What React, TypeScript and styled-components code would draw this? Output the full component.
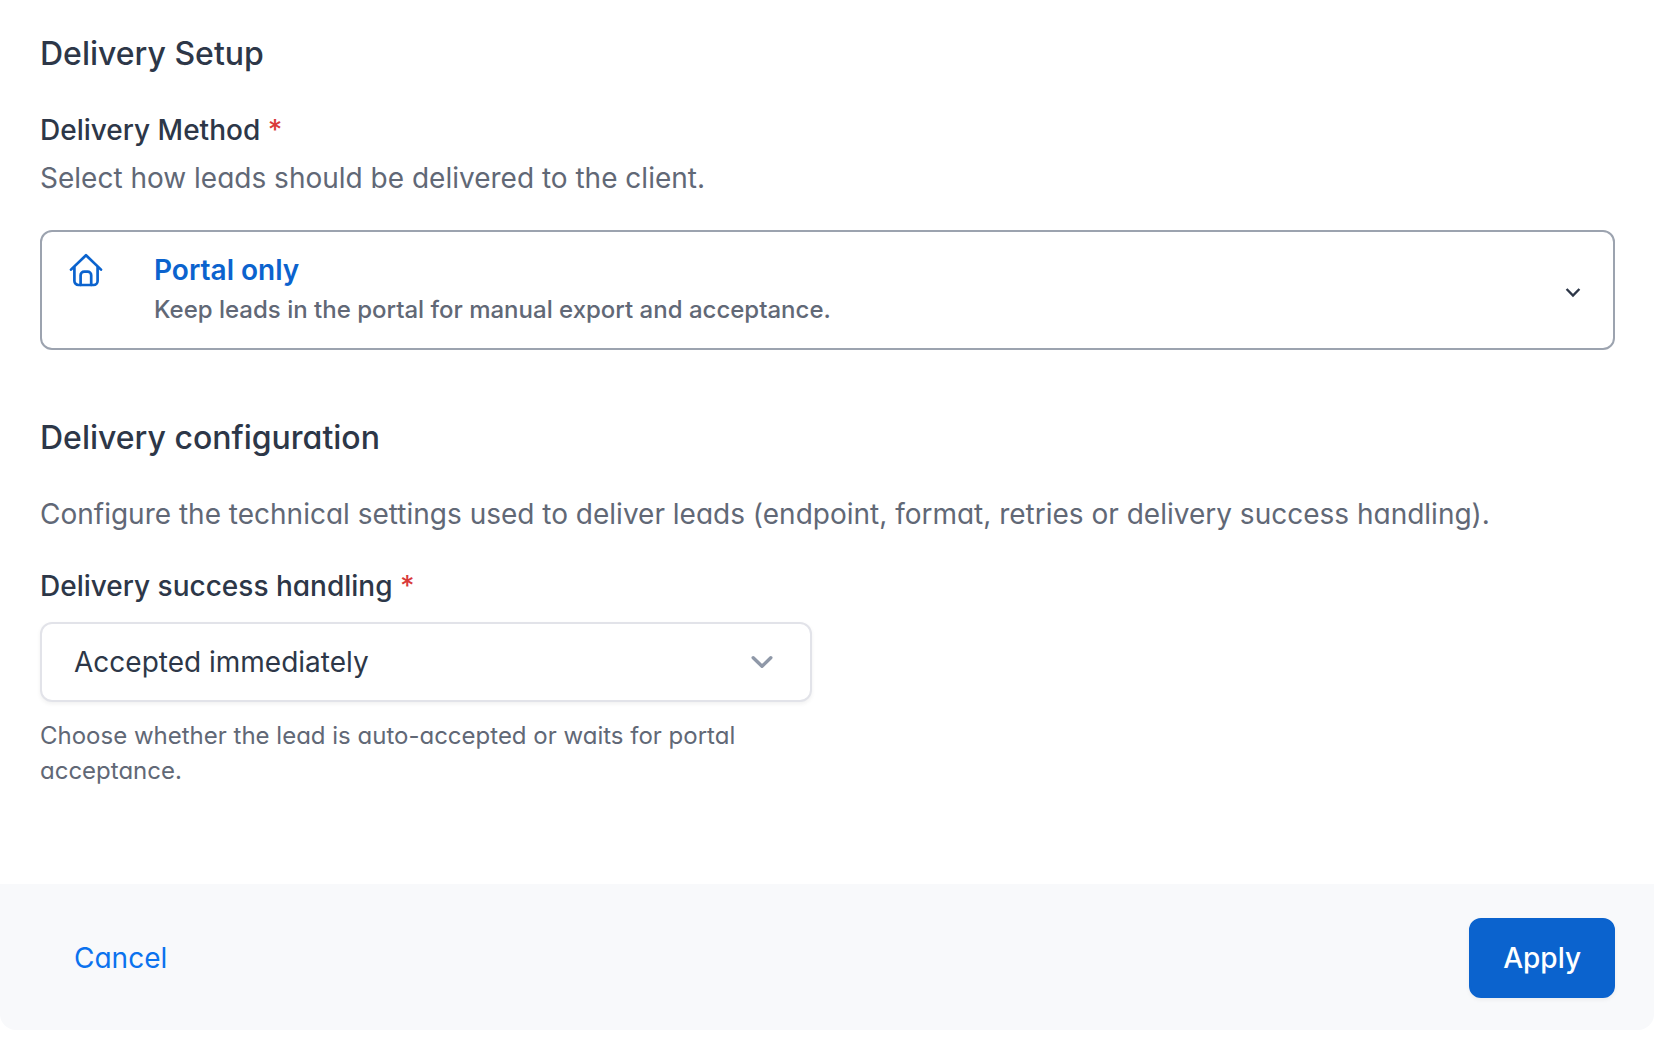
import React, { useState } from "react";
import styled, { createGlobalStyle } from "styled-components";

const GlobalStyle = createGlobalStyle`
  *, *::before, *::after {
    box-sizing: border-box;
  }
  body {
    margin: 0;
    background: #ffffff;
    color: #2d3748;
    font-family: Inter, "Liberation Sans", sans-serif;
    font-size: 28px;
    line-height: 40px;
    font-optical-sizing: none;
    font-feature-settings: "cv11" 1;
    -webkit-font-smoothing: antialiased;
  }
`;

const Panel = styled.form`
  overflow: hidden;
  border-radius: 0 0 16px 16px;
  background: #ffffff;
`;

const Body = styled.div`
  display: flex;
  flex-direction: column;
  gap: 64px;
  padding: 30px 39px 96px 40px;
`;

const Section = styled.section`
  display: flex;
  flex-direction: column;
  gap: 32px;
`;

const Heading = styled.h2`
  margin: 0;
  font-size: 32px;
  line-height: 48px;
  font-weight: 500;
`;

const Field = styled.div<{ $half?: boolean }>`
  display: flex;
  flex-direction: column;
  gap: 16px;
  width: ${(p) => (p.$half ? "49%" : "100%")};
`;

const LabelGroup = styled.div`
  display: flex;
  flex-direction: column;
  gap: 8px;
  margin-bottom: 16px;
`;

const Label = styled.label`
  font-weight: 500;
`;

const Required = styled.span`
  color: #d93a3a;
`;

const Description = styled.p`
  margin: 0;
  color: #616876;
`;

const Hint = styled(Description)`
  font-size: 24px;
  line-height: 35px;
`;

const MethodButton = styled.button`
  display: flex;
  align-items: center;
  width: 100%;
  padding: 18px 32px 18px 26px;
  border: 2px solid #9ca3af;
  border-radius: 12px;
  background: #ffffff;
  color: #2d3748;
  font-family: inherit;
  font-size: 24px;
  line-height: 40px;
  font-weight: 500;
  text-align: left;
  cursor: pointer;
`;

const MethodIcon = styled.svg`
  flex: none;
  align-self: flex-start;
  width: 36px;
  height: 40px;
  margin-right: 50px;
  color: #0b63ce;
`;

const MethodText = styled.span`
  display: flex;
  flex: 1;
  flex-direction: column;
`;

const MethodName = styled.span`
  color: #0b63ce;
  font-size: 28px;
  font-weight: 600;
`;

const MethodDetail = styled.span`
  color: #616876;
`;

const MethodChevron = styled.svg`
  flex: none;
  width: 16px;
  height: 16px;
`;

const SelectWrap = styled.div`
  position: relative;
`;

const Select = styled.select`
  display: block;
  width: 100%;
  height: 80px;
  padding: 0 80px 0 32px;
  border: 2px solid #e2e3e9;
  border-radius: 12px;
  background: #ffffff;
  box-shadow: 0 2px 4px rgba(0, 0, 0, 0.06);
  color: #2d3748;
  font-family: inherit;
  font-size: 28px;
  appearance: none;
`;

const SelectChevron = styled.svg`
  position: absolute;
  top: 28px;
  right: 38px;
  width: 24px;
  height: 24px;
  color: #8f98a8;
  pointer-events: none;
`;

const Footer = styled.footer`
  display: flex;
  align-items: center;
  justify-content: space-between;
  padding: 34px 39px 32px 40px;
  background: #f8f9fb;
`;

const Button = styled.button<{ $primary?: boolean }>`
  height: 80px;
  padding: 0 32px;
  border: 2px solid ${(p) => (p.$primary ? "#0b63ce" : "transparent")};
  border-radius: 12px;
  background: ${(p) => (p.$primary ? "#0b63ce" : "transparent")};
  box-shadow: ${(p) => (p.$primary ? "0 2px 4px rgba(0, 0, 0, 0.05)" : "none")};
  color: ${(p) => (p.$primary ? "#ffffff" : "#0b72ee")};
  font: inherit;
  font-weight: ${(p) => (p.$primary ? 500 : 400)};
  font-feature-settings: inherit;
  cursor: pointer;
`;

export default function App() {
  const [handling, setHandling] = useState("immediate");

  return (
    <>
      <GlobalStyle />
      <Panel onSubmit={(event) => event.preventDefault()}>
        <Body>
          <Section>
            <Heading>Delivery Setup</Heading>
            <Field>
              <LabelGroup>
                <Label htmlFor="delivery-method">
                  Delivery Method <Required>*</Required>
                </Label>
                <Description id="delivery-method-help">
                  Select how leads should be delivered to the client.
                </Description>
              </LabelGroup>
              <MethodButton
                id="delivery-method"
                type="button"
                aria-haspopup="listbox"
                aria-expanded={false}
                aria-describedby="delivery-method-help"
              >
                <MethodIcon viewBox="0 0 36 40" fill="none" stroke="currentColor" strokeWidth="2.7" strokeLinecap="round" strokeLinejoin="round" aria-hidden="true">
                  <path d="M3 19.6 18 5.2 33 19.6" />
                  <path d="M6.4 17.5V31a4 4 0 0 0 4 4H25.6a4 4 0 0 0 4-4V17.5" />
                  <path d="M12.6 35V25.3a3.6 3.6 0 0 1 3.6-3.6h3.4a3.6 3.6 0 0 1 3.6 3.6V35" />
                </MethodIcon>
                <MethodText>
                  <MethodName>Portal only</MethodName>
                  <MethodDetail>Keep leads in the portal for manual export and acceptance.</MethodDetail>
                </MethodText>
                <MethodChevron viewBox="0 0 16 16" fill="none" stroke="currentColor" strokeWidth="2.4" aria-hidden="true">
                  <path d="m1.6 7 6.4 6.6L14.4 7" />
                </MethodChevron>
              </MethodButton>
            </Field>
          </Section>
          <Section>
            <Heading>Delivery configuration</Heading>
            <Description>
              Configure the technical settings used to deliver leads (endpoint, format, retries or delivery success
              handling).
            </Description>
            <Field $half>
              <Label htmlFor="success-handling">
                Delivery success handling <Required>*</Required>
              </Label>
              <SelectWrap>
                <Select
                  id="success-handling"
                  value={handling}
                  onChange={(event) => setHandling(event.target.value)}
                  aria-describedby="success-handling-help"
                >
                  <option value="immediate">Accepted immediately</option>
                </Select>
                <SelectChevron viewBox="0 0 24 24" fill="none" stroke="currentColor" strokeWidth="3.4" strokeLinecap="round" strokeLinejoin="round" aria-hidden="true">
                  <path d="m3.2 7.7 8.8 8.6 8.8-8.6" />
                </SelectChevron>
              </SelectWrap>
              <Hint id="success-handling-help">
                Choose whether the lead is auto-accepted or waits for portal acceptance.
              </Hint>
            </Field>
          </Section>
        </Body>
        <Footer>
          <Button type="button">Cancel</Button>
          <Button type="submit" $primary>
            Apply
          </Button>
        </Footer>
      </Panel>
    </>
  );
}
